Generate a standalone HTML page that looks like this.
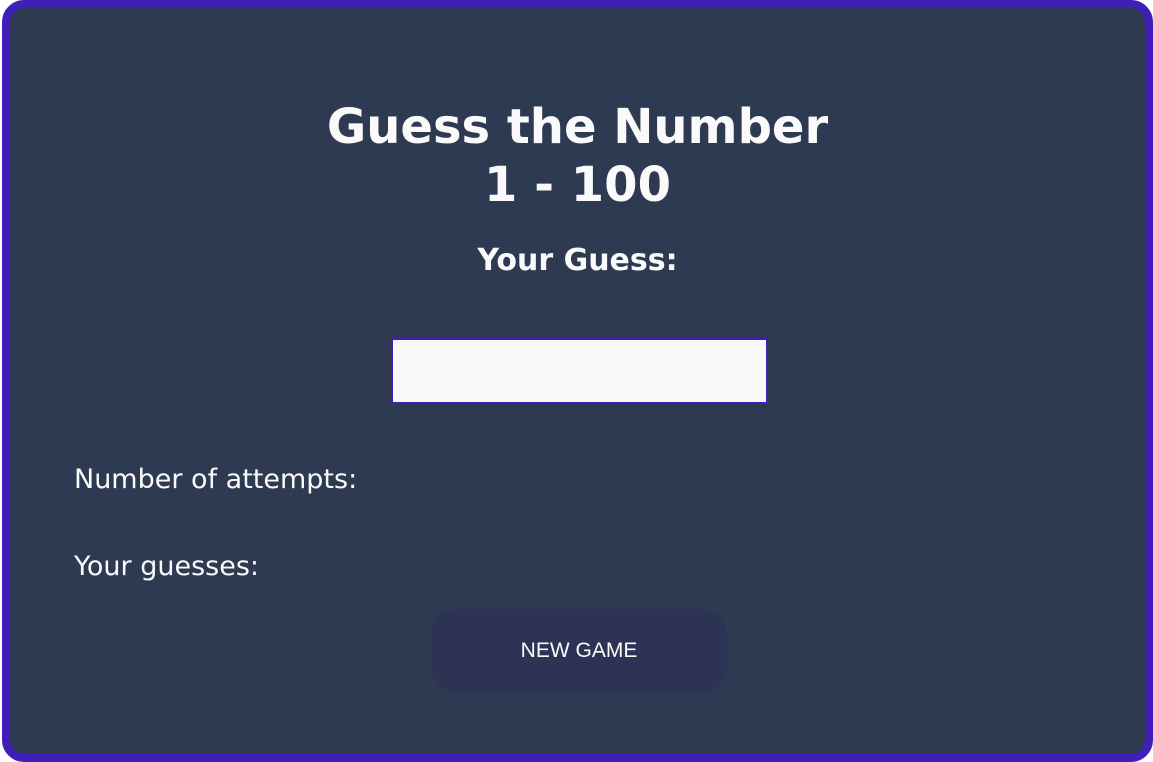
<!DOCTYPE html>
<html><head><style>
html,body{margin:0;padding:0;background:#fff;width:1153px;height:762px;overflow:hidden}
.box{position:absolute;left:2px;top:0;width:1135px;height:746px;border:8px solid #3f1fb8;border-radius:22px;background:#2d3a52;color:#fafafa;font-family:"DejaVu Sans",Verdana,sans-serif}
h1{position:absolute;left:0;right:0;top:90px;margin:0;text-align:center;font-size:48px;line-height:58px;font-weight:bold}
h2{position:absolute;left:0;right:0;top:235px;margin:0;text-align:center;font-size:30px;line-height:36px;font-weight:bold}
.inp{position:absolute;left:381px;top:330px;width:373px;height:62px;border:2px solid #3f1fb8;background:#f8f8f8}
.t{position:absolute;left:64px;font-size:27px;line-height:32px}
.btn{position:absolute;left:421px;top:601px;width:296px;height:83px;border-radius:26px;background:#2c3354;font-family:"Liberation Sans",Arial,sans-serif;font-size:21px;text-align:center;line-height:83px}
</style></head><body>
<div class="box">
<h1>Guess the Number<br>1 - 100</h1>
<h2>Your Guess:</h2>
<div class="inp"></div>
<div class="t" style="top:456px">Number of attempts:</div>
<div class="t" style="top:543px">Your guesses:</div>
<div class="btn">NEW GAME</div>
</div>
</body></html>
